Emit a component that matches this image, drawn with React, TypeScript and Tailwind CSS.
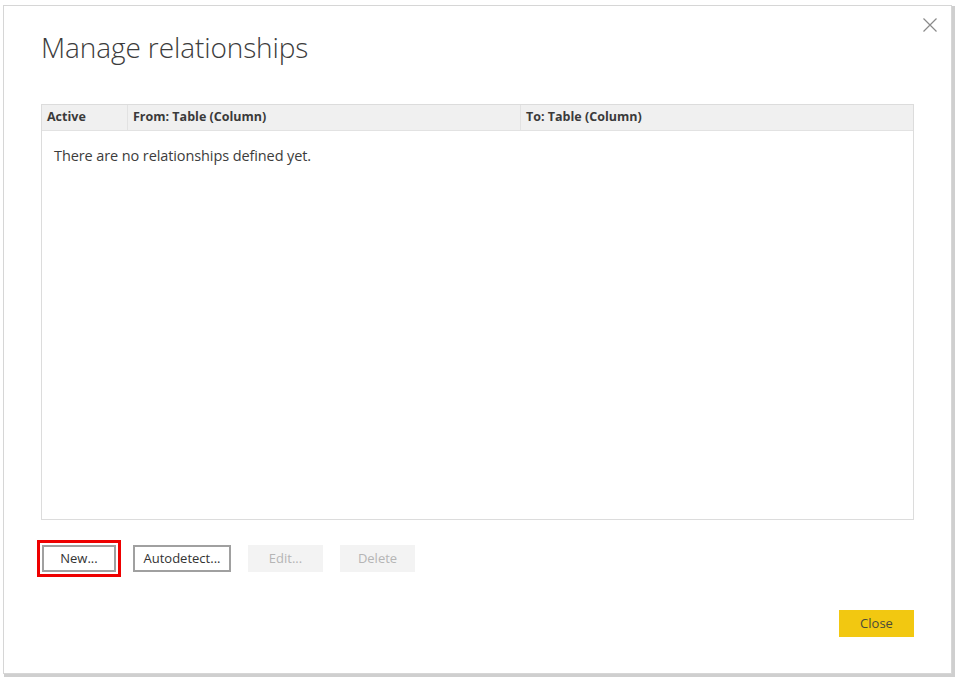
import React from 'react';

const font = { fontFamily: '"Open Sans", "Noto Sans", sans-serif' };

export default function App() {
  return (
    <div className="w-[958px] h-[682px] bg-white overflow-hidden" style={font}>
      <div className="relative ml-[3px] mt-[5px] w-[949px] h-[669px] bg-white border border-[#d6d6d6] shadow-[2px_2px_0_1px_#cfcfcf] flex flex-col pl-[37px] pr-[37px]">
        {/* Close X */}
        <button className="absolute top-[10px] right-[12px] w-[18px] h-[18px] flex items-center justify-center text-[#8a8a8a]">
          <svg width="16" height="16" viewBox="0 0 16 16" fill="none" stroke="currentColor" strokeWidth="1.2">
            <path d="M1.5 1.5 L14.5 14.5 M14.5 1.5 L1.5 14.5" />
          </svg>
        </button>

        <h1 className="mt-[23px] text-[28px] font-light text-[#3c3c3c] leading-[36px] tracking-[-0.1px]">
          Manage relationships
        </h1>

        {/* Table */}
        <div className="mt-[39px] h-[416px] border border-[#dcdcdc] flex flex-col">
          <div className="flex h-[26px] bg-[#f0f0f0] border-b border-[#e2e2e2] text-[12.5px] font-bold text-[#3a3a3a]">
            <div className="w-[86px] px-[5px] flex items-center border-r border-[#e2e2e2]">Active</div>
            <div className="w-[393px] px-[5px] flex items-center border-r border-[#e2e2e2]">From: Table (Column)</div>
            <div className="flex-1 px-[5px] flex items-center">To: Table (Column)</div>
          </div>
          <div className="px-[12px] pt-[14px] text-[14.5px] text-[#3c3c3c] tracking-[-0.1px]">
            There are no relationships defined yet.
          </div>
        </div>

        {/* Buttons */}
        <div className="mt-[25px] flex gap-[17px] text-[13px]">
          <button className="ml-[1px] w-[74px] h-[27px] border-2 border-[#a0a0a0] bg-white text-[#333] outline-[3px] outline-solid outline-[#ee0000] outline-offset-[2px]">
            New...
          </button>
          <button className="w-[98px] h-[27px] border-2 border-[#a0a0a0] bg-white text-[#333]">
            Autodetect...
          </button>
          <button className="w-[75px] h-[27px] bg-[#f3f3f3] text-[#b5b5b5]">Edit...</button>
          <button className="w-[75px] h-[27px] bg-[#f3f3f3] text-[#b5b5b5]">Delete</button>
        </div>

        <div className="mt-[38px] flex justify-end">
          <button className="w-[75px] h-[27px] bg-[#f2c811] text-[13px] text-[#4a4a3a]">Close</button>
        </div>
      </div>
    </div>
  );
}
